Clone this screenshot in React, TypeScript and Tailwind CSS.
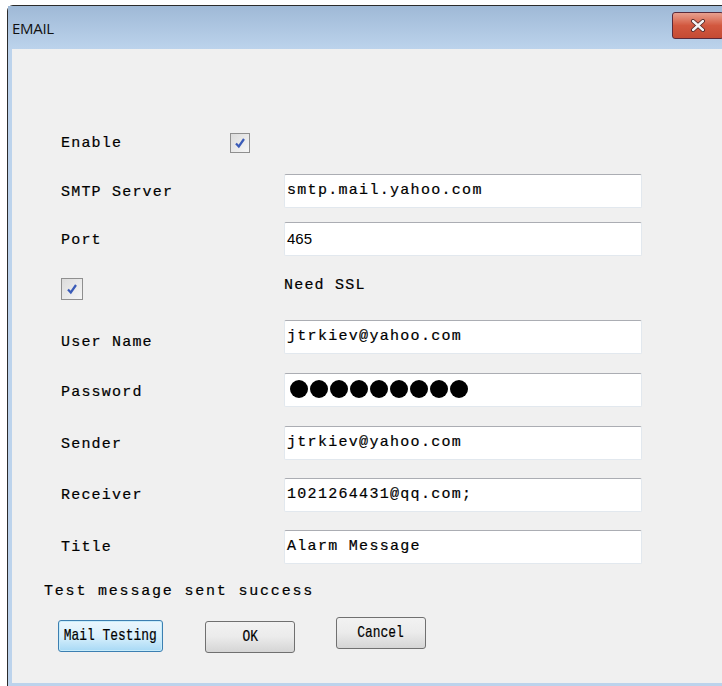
import React from 'react';

const mono = {
  fontFamily: '"Liberation Mono", "DejaVu Sans Mono", monospace',
  WebkitTextStroke: '0.2px #000',
};

const Check: React.FC<{ className?: string }> = ({ className = '' }) => (
  <div
    className={`w-[20px] h-[20px] border border-[#8f8f8f] bg-gradient-to-br from-[#dcdcdc] to-[#f6f6f6] flex items-center justify-center ${className}`}
  >
    <svg width="12" height="12" viewBox="0 0 12 12">
      <path d="M2 6.5 L4.8 9.5 L10 2" fill="none" stroke="#3a5bb8" strokeWidth="2.2" />
    </svg>
  </div>
);

const Field: React.FC<{ value?: string; dots?: number; sans?: boolean }> = ({ value, dots, sans }) => (
  <div className="w-[358px] h-[34px] bg-white rounded-[2px] border border-[#e2e8ee] border-t-[#abadb3] flex items-center pl-[2px]">
    {dots ? (
      <div className="flex gap-[2px] pl-[3px] -mt-[3px]">
        {Array.from({ length: dots }).map((_, i) => (
          <span key={i} className="block w-[18px] h-[18px] rounded-full bg-black" />
        ))}
      </div>
    ) : sans ? (
      <span className="text-[15px] text-black" style={{ fontFamily: '"Liberation Sans", Arial, sans-serif' }}>
        {value}
      </span>
    ) : (
      <span className="text-[15px] tracking-[1.3px] text-black" style={mono}>
        {value}
      </span>
    )}
  </div>
);

const Row: React.FC<{ label: string; mt: string; drop?: string; children: React.ReactNode }> = ({
  label,
  mt,
  drop = 'mt-[4px]',
  children,
}) => (
  <div className={`flex items-center h-[34px] ${mt}`}>
    <span className={`w-[223px] text-[15px] tracking-[1.2px] text-black ${drop}`} style={mono}>
      {label}
    </span>
    {children}
  </div>
);

const Btn: React.FC<{ label: string; active?: boolean; className?: string }> = ({ label, active, className = '' }) => (
  <button
    className={`h-[32px] rounded-[3px] border text-black whitespace-nowrap flex items-center justify-center bg-gradient-to-b ${
      active
        ? 'border-[#3c7fb1] from-[#eaf6fd] via-[#d9f0fc] to-[#a7d9f5] shadow-[inset_0_0_0_1px_#c7ecfb]'
        : 'border-[#707070] from-[#f2f2f2] via-[#ebebeb] to-[#d5d5d5]'
    } ${className}`}
  >
    <span className="inline-block text-[17px] scale-x-[0.76]" style={mono}>
      {label}
    </span>
  </button>
);

const App: React.FC = () => {
  return (
    <div className="w-[722px] h-[686px] bg-white pt-[5px] pl-[7px] overflow-hidden">
      <div className="w-[740px] h-[681px] border-l border-t border-[#2b2b2b] rounded-tl-[6px] bg-[#bcd3ec] flex flex-col">
        {/* title bar */}
        <div className="h-[43px] flex justify-between bg-gradient-to-b from-[#9fb9d6] to-[#bcd3ec] pl-[4px]">
          <span
            className="mt-[11px] text-[15px] tracking-[-0.3px] text-[#111]"
            style={{ fontFamily: '"Open Sans", "Liberation Sans", sans-serif' }}
          >
            EMAIL
          </span>
          <div className="w-[52px] h-[27px] mt-[6px] mr-[23px] rounded-[3px] border border-[#5a2a3a] bg-gradient-to-b from-[#e8a08f] via-[#d2583f] to-[#c44a33] flex items-center justify-center">
            <svg width="16" height="13" viewBox="0 0 16 13">
              <path d="M3 2 L13 11 M13 2 L3 11" stroke="#4b2020" strokeWidth="4" strokeLinecap="round" />
              <path d="M3 2 L13 11 M13 2 L3 11" stroke="#f4f4f4" strokeWidth="2.4" strokeLinecap="round" />
            </svg>
          </div>
        </div>

        {/* client area */}
        <div className="flex-1 ml-[4px] mb-[3px] bg-[#f0f0f0] pl-[49px] flex flex-col">
          <div className="flex items-center h-[34px] mt-[77px]">
            <span className="w-[169px] mt-[3px] text-[15px] tracking-[1.2px] text-black" style={mono}>
              Enable
            </span>
            <Check />
          </div>
          <Row label="SMTP Server" mt="mt-[14px]">
            <Field value="smtp.mail.yahoo.com" />
          </Row>
          <Row label="Port" mt="mt-[14px]" drop="mt-[5px]">
            <Field value="465" sans />
          </Row>
          <div className="flex h-[34px] mt-[16px]">
            <Check className="mt-[6px] w-[22px] h-[22px]" />
            <span className="ml-[201px] text-[15px] tracking-[1.2px] text-black mt-[3px]" style={mono}>
              Need SSL
            </span>
          </div>
          <Row label="User Name" mt="mt-[14px]" drop="mt-[12px]">
            <Field value="jtrkiev@yahoo.com" />
          </Row>
          <Row label="Password" mt="mt-[19px]" drop="mt-[7px]">
            <Field dots={9} />
          </Row>
          <Row label="Sender" mt="mt-[19px]" drop="mt-[5px]">
            <Field value="jtrkiev@yahoo.com" />
          </Row>
          <Row label="Receiver" mt="mt-[18px]" drop="mt-[2px]">
            <Field value="1021264431@qq.com;" />
          </Row>
          <Row label="Title" mt="mt-[18px]" drop="mt-[2px]">
            <Field value="Alarm Message" />
          </Row>
          <span className="mt-[17px] ml-[-17px] text-[15px] tracking-[1.8px] text-black" style={mono}>
            Test message sent success
          </span>
          <div className="flex items-start mt-[13px] ml-[-3px]">
            <Btn label="Mail Testing" active className="w-[105px] mt-[3px]" />
            <Btn label="OK" className="w-[90px] mt-[4px] ml-[42px]" />
            <Btn label="Cancel" className="w-[90px] ml-[41px]" />
          </div>
        </div>
      </div>
    </div>
  );
};

export default App;
